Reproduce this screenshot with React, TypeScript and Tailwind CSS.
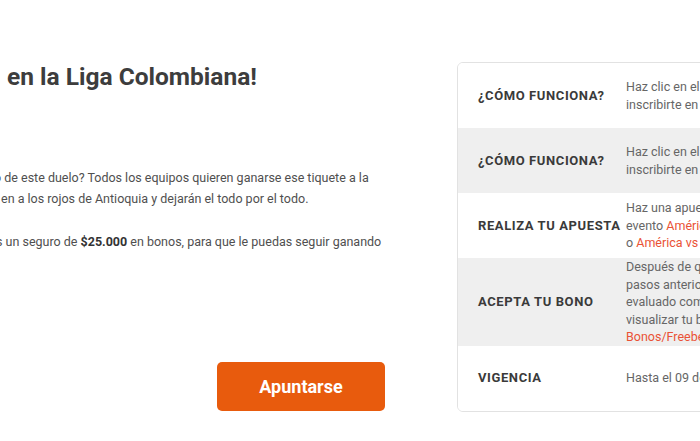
const rows = [
  {
    label: "¿CÓMO FUNCIONA?",
    lines: [
      [{ t: "Haz clic en el botón Apuntarse para" }],
      [{ t: "inscribirte en la promoción." }],
    ],
  },
  {
    label: "¿CÓMO FUNCIONA?",
    lines: [
      [{ t: "Haz clic en el botón Apuntarse para" }],
      [{ t: "inscribirte en la promoción." }],
    ],
  },
  {
    label: "REALIZA TU APUESTA",
    lines: [
      [{ t: "Haz una apuesta de mínimo $10.000 en el" }],
      [{ t: "evento " }, { t: "América vs Nacional", red: true }],
      [{ t: "o " }, { t: "América vs Medellín", red: true }],
    ],
  },
  {
    label: "ACEPTA TU BONO",
    lines: [
      [{ t: "Después de que hayas completado los" }],
      [{ t: "pasos anteriores y tu apuesta haya sido" }],
      [{ t: "evaluado como perdida, podrás" }],
      [{ t: "visualizar tu bono en la sección" }],
      [{ t: "Bonos/Freebets", red: true }],
    ],
  },
  {
    label: "VIGENCIA",
    lines: [[{ t: "Hasta el 09 de octubre de 2022." }]],
  },
];

export default function App() {
  return (
    <div className="w-[700px] h-[441px] overflow-hidden bg-white flex font-['Roboto',sans-serif]">
      <div className="w-[457px] shrink-0 flex flex-col overflow-hidden">
        <h1 className="mt-[62px] ml-[7px] text-[24.5px] leading-[30px] font-bold text-[#3d3d3d] whitespace-nowrap">
          en la Liga Colombiana!
        </h1>
        <div className="mt-[75px] text-[12.5px] leading-[21px] text-[#4f4f4f] whitespace-nowrap">
          <p className="-ml-[6px]">
            o de este duelo? Todos los equipos quieren ganarse ese tiquete a la
          </p>
          <p className="ml-[1px]">en a los rojos de Antioquia y dejarán el todo por el todo.</p>
          <p className="mt-[22px] -ml-[4px]">
            s un seguro de <span className="font-bold text-[#333]">$25.000</span> en bonos, para que le puedas seguir ganando
          </p>
        </div>
        <button className="mt-[110px] ml-[217px] w-[168px] h-[49px] rounded-[5px] bg-[#e85b0d] text-white text-[18px] font-bold">
          Apuntarse
        </button>
      </div>
      <div className="mt-[62px] w-[400px] shrink-0 self-start border border-[#e2e2e2] rounded-[6px] overflow-hidden">
        {rows.map((row, i) => (
          <div
            key={i}
            className={
              "flex items-center min-h-[65px] " + (i % 2 === 1 ? "bg-[#efefef]" : "bg-white")
            }
          >
            <div className="w-[168px] shrink-0 pl-[20px] text-[13px] font-bold tracking-[0.6px] text-[#3a3a3a] whitespace-nowrap">
              {row.label}
            </div>
            <div className="text-[12.5px] leading-[17.5px] text-[#666]">
              {row.lines.map((line, j) => (
                <div key={j} className="whitespace-nowrap">
                  {line.map((s, k) => (
                    <span key={k} className={s.red ? "text-[#ea5236]" : ""}>
                      {s.t}
                    </span>
                  ))}
                </div>
              ))}
            </div>
          </div>
        ))}
      </div>
    </div>
  );
}
